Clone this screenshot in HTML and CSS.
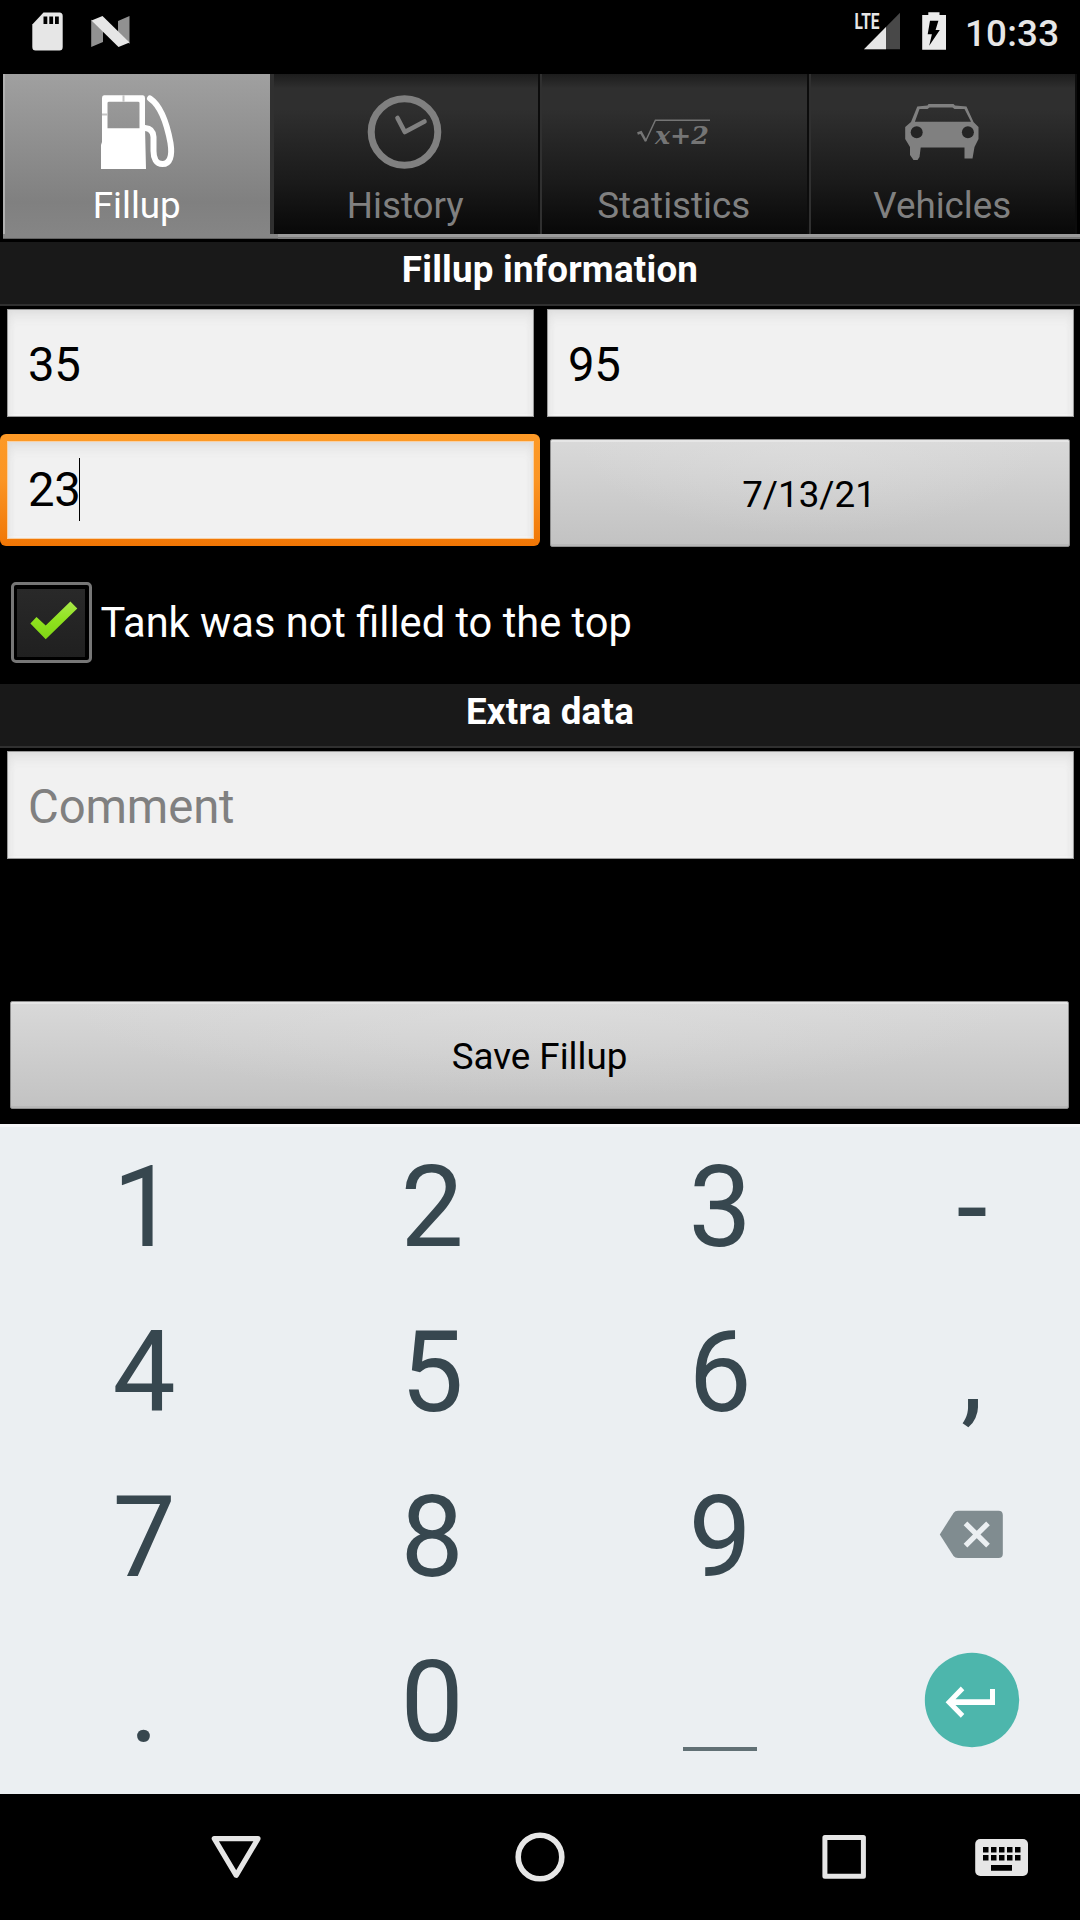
FILE: index.html
```html
<!DOCTYPE html>
<html lang="en">
<head>
<meta charset="utf-8">
<title>Fillup</title>
<link rel="stylesheet" href="styles.css">
</head>
<body>
<div class="screen">
  <header class="status">
    <svg class="status-left" viewBox="0 0 160 74" width="160" height="74">
      <path fill="#e6e6e6" d="M43.500 12.500H59.500Q62.700 12.500 62.700 16V47Q62.700 50.600 59.500 50.600H35.500Q32.300 50.600 32.300 47V24.500Z"/>
      <path d="M43.500 16.500h3.800v7.500h-3.800zM49.300 16.500h3.800v7.500h-3.800zM55 16.500h3.800v7.500H55z"/>
      <path fill="#919191" d="M91.200 19.500L103 31V42L91.200 47zM129.500 16V44L118 32V21z"/>
      <path fill="#e6e6e6" d="M91.500 20.500L102.500 16L129.500 42.500L118.500 47z"/>
    </svg>
    <svg class="status-right" viewBox="845 0 115 74" width="115" height="74">
      <path fill="#484848" d="M900 12.700V49.300H864z"/>
      <path fill="#e6e6e6" d="M886 27V49.300H864z"/>
      <text class="lte" x="854.500" y="29.300" textLength="25" lengthAdjust="spacingAndGlyphs">LTE</text>
      <path fill="#ebebeb" d="M928.300 12.300H939.500V15H946V49.700H922.200V15H928.300z"/>
      <path d="M930 20.700H938.400L935.600 30H939.800L929.200 45.700L931.900 34.300H927.700z"/>
    </svg>
    <span class="clock">10:33</span>
  </header>

  <nav class="tabs">
    <div class="tab selected">
      <svg viewBox="3 90 268.500 84">
        <path fill="#fff" fill-rule="evenodd" d="M104 95.300H143Q145 95.300 145 98V128L146 169H101V145L102 142V98Q102 95.300 104 95.300zM107.500 103V128.300H139.500V103Q139.500 101.700 138 101.700H109Q107.500 101.700 107.500 103z"/>
        <path stroke="#c4c4c4" stroke-width="2" d="M123.500 95.300v6.400M102 114.500h5.500"/>
        <path fill="none" stroke="#fff" stroke-width="6" stroke-linecap="round" d="M150 98.500C161 106 167 124 170.500 143C172.500 156 170 164 162.500 164C156 164 153.500 158 153.500 151V137Q153 128.500 145 128"/>
      </svg>
      <span>Fillup</span>
    </div>
    <div class="tab">
      <svg viewBox="271.500 90 268.500 84">
        <circle cx="405" cy="132" r="33.300" fill="none" stroke="#808080" stroke-width="7"/>
        <path fill="none" stroke="#808080" stroke-width="4.600" stroke-linecap="round" stroke-linejoin="round" d="M398 118L405.300 132L425 121.500"/>
      </svg>
      <span>History</span>
    </div>
    <div class="tab">
      <svg viewBox="540 90 268.500 84">
        <path fill="none" stroke="#757575" stroke-width="1.500" d="M645.400 141.500L655.400 120.300H710"/>
        <path fill="none" stroke="#757575" stroke-width="2.500" d="M637.500 133.500L641 132.300L645.800 141"/>
        <text class="formula" x="655" y="144" textLength="54" lengthAdjust="spacingAndGlyphs">x+2</text>
      </svg>
      <span>Statistics</span>
    </div>
    <div class="tab">
      <svg viewBox="808.500 90 268.500 84">
        <path fill="#808080" fill-rule="evenodd" d="M917.800 106.500L928 105.500L929 104H954L955.500 105.500L967 106.500L974 122L979 127V139L975 147L973 158.500H965V147.500H921.200L920 157L918 160H914L910.500 155V147L905.700 139V127L911.500 122zM915.400 121.700H971.500L965 109H955L953 107.500H930L928 109H920z"/>
        <circle cx="917.200" cy="132.300" r="6" fill="#242424"/>
        <circle cx="968.400" cy="132.300" r="6" fill="#242424"/>
      </svg>
      <span>Vehicles</span>
    </div>
  </nav>
  <div class="strip"><i class="strip-selected"></i><i class="strip-rest"></i></div>

  <main class="form">
    <h2 class="section">Fillup information</h2>
    <div class="row first">
      <div class="field">35</div>
      <div class="field">95</div>
    </div>
    <div class="row second">
      <div class="focus"><div class="field">23<i class="caret"></i></div></div>
      <div class="button date">7/13/21</div>
    </div>
    <div class="check-row">
      <span class="checkbox">
        <svg viewBox="17 589 68 68" width="68" height="68">
          <defs><linearGradient id="tick" x1="0" y1="0" x2="0" y2="1"><stop offset="0" stop-color="#a9e84a"/><stop offset=".5" stop-color="#8fe21e"/><stop offset="1" stop-color="#7fd415"/></linearGradient></defs>
          <path fill="url(#tick)" d="M30.400 623.500L36.500 617L45.700 625.500L70.400 601.500L77.300 608.500L45.700 639.300z"/>
        </svg>
      </span>
      <span>Tank was not filled to the top</span>
    </div>
    <h2 class="section">Extra data</h2>
    <div class="row comment"><div class="field hint">Comment</div></div>
    <div class="button save">Save Fillup</div>
  </main>

  <section class="keypad">
    <span>1</span><span>2</span><span>3</span><span>-</span>
    <span>4</span><span>5</span><span>6</span><span>,</span>
    <span>7</span><span>8</span><span>9</span>
    <span><svg viewBox="932 1500 80 70" width="80" height="70">
      <path fill="#808c90" d="M939.800 1534.500L953.500 1513Q955 1510.700 958 1510.700H998.500Q1002.800 1510.700 1002.800 1515V1554Q1002.800 1558 998.500 1558H958Q955 1558 953.500 1556z"/>
      <path stroke="#ebeff2" stroke-width="5.200" d="M965.500 1523.300L988 1545.700M988 1523.300L965.500 1545.700"/>
    </svg></span>
    <span>.</span><span>0</span>
    <span class="space"><i></i></span>
    <span><svg viewBox="922 1650 100 100" width="100" height="100">
      <circle cx="972" cy="1700" r="47.200" fill="#4db6ac"/>
      <path fill="#fff" d="M945.600 1702.300L960.800 1686.600L964.300 1690.200L955.500 1699.300H990V1689H995V1705H955.500L964.300 1714L960.800 1717.700z"/>
    </svg></span>
  </section>

  <footer class="navbar">
    <svg viewBox="0 1794 1080 126" width="1080" height="126">
      <g fill="none" stroke="#e6e6e6" stroke-linejoin="round">
        <path stroke-width="5.200" d="M214.300 1838.600H258L236.200 1875.300z"/>
        <circle cx="540" cy="1857" r="21.800" stroke-width="5.600"/>
        <rect x="824.900" y="1837.500" width="38.500" height="38.800" stroke-width="5"/>
      </g>
      <rect x="975.200" y="1839" width="52.800" height="37" rx="5" fill="#e6e6e6"/>
      <path d="M983 1847h5.500v5.400H983zM991 1847h5.500v5.400H991zM999 1847h5.500v5.400H999zM1007 1847h5.500v5.400H1007zM1015 1847h5.500v5.400H1015zM983 1855h5.500v5.400H983zM991 1855h5.500v5.400H991zM999 1855h5.500v5.400H999zM1007 1855h5.500v5.400H1007zM1015 1855h5.500v5.400H1015zM991 1865h21v5.700H991z"/>
    </svg>
  </footer>
</div>
</body>
</html>
```
FILE: styles.css
```css
* { box-sizing: border-box; }
body { margin: 0; background: #000; }
svg { display: block; }

.screen {
  width: 1080px;
  height: 1920px;
  overflow: hidden;
  background: #000;
  color: #fff;
  font: 36.75px/44px Roboto, sans-serif;
}

.status { display: flex; height: 74px; }
.status-right { margin-left: auto; }
.clock {
  width: 120px;
  padding: 11.500px 0 0 5px;
  color: #e6e6e6;
  font-weight: 500;
  letter-spacing: .2px;
}
.lte { font: 700 22.500px Roboto, sans-serif; fill: #e6e6e6; }
.formula { font: italic bold 25px "DejaVu Serif", serif; fill: #757575; }

.tabs {
  display: grid;
  grid-template-columns: repeat(4, 268.500px);
  height: 160px;
  padding-left: 3px;
}
.tab {
  padding-top: 16px;
  color: #808080;
  text-align: center;
  background: linear-gradient(#1c1c1c, #2f2f2f 9%, #2f2f2f 22%, #1a1a1a 68%, #080808);
  border-left: 2px solid #303030;
  border-right: 2px solid #0c0c0c;
}
.tab svg { width: 268.500px; height: 84px; margin-left: -2.500px; }
.tab span { display: block; padding: 9.500px 1px 0 0; }
.tab.selected {
  color: #fff;
  background: linear-gradient(#a0a0a0, #808080 80%, #858585);
  border-left: 2px solid #b0b0b0;
  border-right: 2px solid #303030;
}

.strip { display: flex; height: 8px; padding-left: 3px; }
.strip i { height: 5px; }
.strip-selected { width: 275px; background: linear-gradient(#858585 70%, #505050); }
.strip-rest { flex: 1; background: linear-gradient(#9b9b9b 60%, #7d7d7d 60%); }

.section {
  height: 64px;
  margin: 0;
  padding: 5.500px 0 0 20px;
  font-size: 36.75px;
  font-weight: 700;
  line-height: 44px;
  letter-spacing: .22px;
  text-align: center;
  background: #191919;
  border-bottom: 2px solid #303030;
}
.row { display: flex; }
.first { gap: 13px; padding: 3px 6px 0 7px; }
.field {
  flex: 1;
  height: 108px;
  padding-left: 20px;
  color: #000;
  font-size: 47.25px;
  line-height: 111px;
  letter-spacing: -.4px;
  background: #f1f1f1;
  border: 1px solid #999;
  box-shadow: inset 0 10px 14px -6px #dcdcdc, inset 4px 0 9px -5px #d8d8d8, inset -4px 0 9px -5px #d8d8d8, inset 0 -2px #f8f8f8;
}
.second { gap: 9.500px; padding-top: 17px; }
.focus {
  width: 540px;
  height: 112px;
  padding: 7px 6px 7px 7px;
  background: linear-gradient(#fd9a27, #fb9524 40%, #f07605);
  border-radius: 6px;
}
.focus .field {
  display: flex;
  align-items: center;
  height: 98px;
  border-color: #f8d0a4;
  line-height: 94px;
}
.caret { width: 1px; height: 63px; margin: 0 0 2px -1px; background: #000; }
.button {
  height: 108px;
  color: #000;
  text-align: center;
  background: radial-gradient(ellipse 45% 90% at 50% 0, #e0e0e080, #e0e0e000), linear-gradient(#d9d9d9, #c2c2c2);
  border: 1px solid #8d8d8d;
  border-radius: 2px;
  box-shadow: inset 0 2px #e6e6e6, inset 0 -2px #b8b8b8;
}
.date { width: 520px; margin-top: 5px; padding-right: 1px; line-height: 109px; }

.check-row {
  display: flex;
  align-items: center;
  gap: 9px;
  height: 137px;
  padding: 14px 0 0 10.500px;
  font-size: 41.6px;
}
.check-row span:last-child { padding-top: 1px; }
.checkbox {
  width: 81px;
  height: 81px;
  padding: 3.500px;
  border: 3px solid #777;
  border-radius: 5px;
}
.checkbox svg { background: linear-gradient(#292929, #202020); }

.comment { padding: 3px 6px 0 7px; }
.hint { color: #808080; letter-spacing: -.1px; }
.save { margin: 142px 11px 0 10px; line-height: 110px; }

.keypad {
  display: grid;
  grid-template-columns: 288px 288px 288px 216px;
  grid-template-rows: repeat(4, 165px);
  height: 670px;
  margin-top: 15px;
  color: #37474f;
  font-size: 112.500px;
  line-height: 160px;
  text-align: center;
  background: #ebeff2;
  border-top: 3px solid #f5f6f8;
}
.keypad svg { margin: auto; }
.keypad span { display: grid; align-items: center; padding: 1px 0 4px; }
.keypad span:has(svg) { padding: 0 0 9px; }
.keypad .space { align-items: end; justify-content: center; padding-bottom: 36px; }
.space i { width: 74px; height: 4px; background: #617075; }
```
